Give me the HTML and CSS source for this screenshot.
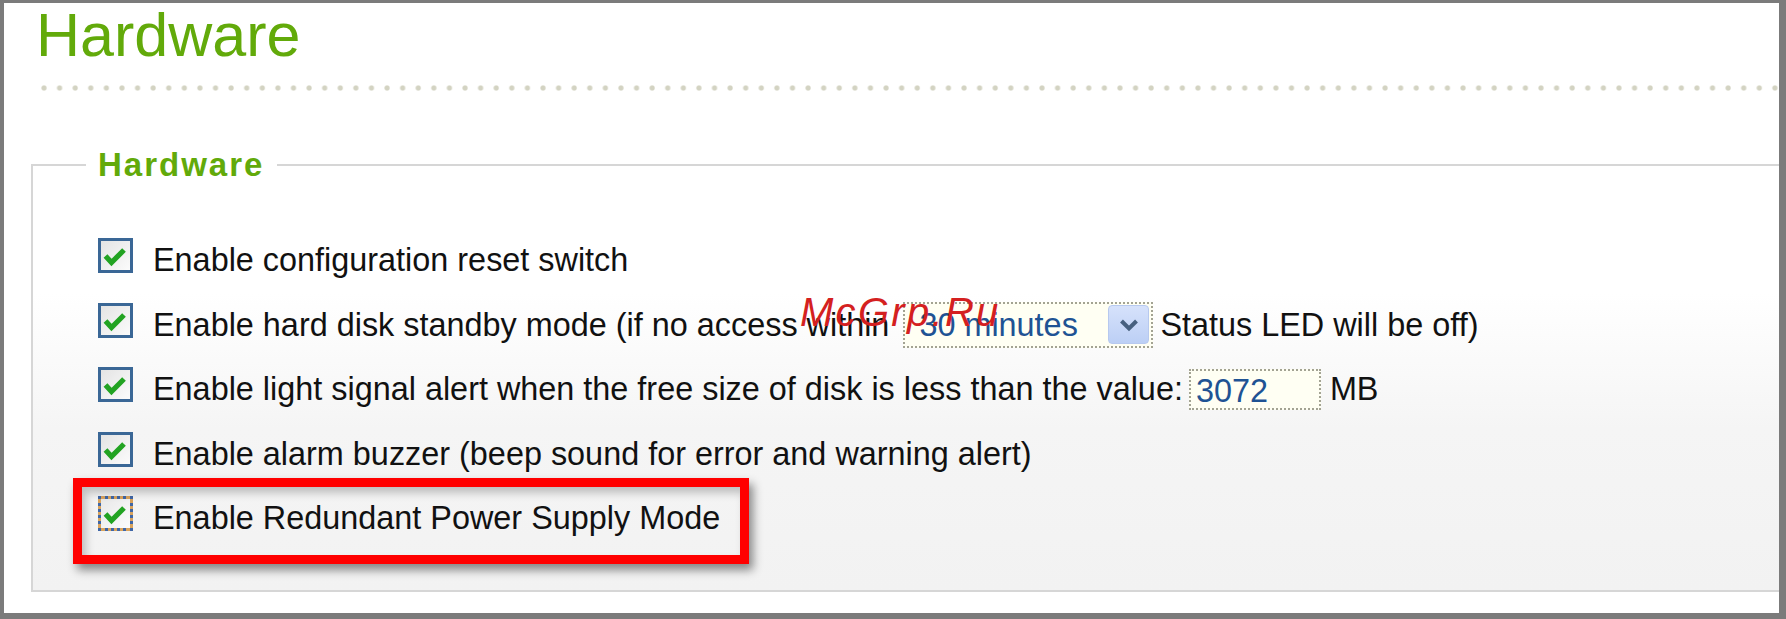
FILE: index.html
```html
<!DOCTYPE html>
<html>
<head>
<meta charset="utf-8">
<link rel="stylesheet" href="styles.css">
</head>
<body>
<div class="frame">
  <h1 class="title">Hardware</h1>
  <div class="dots"></div>
  <fieldset class="group">
    <legend class="group-title">Hardware</legend>
    <div class="row">
      <span class="cb"><svg viewBox="0 0 29 29" width="29" height="29"><polyline points="4.5,15 10.5,21.5 23,9" fill="none" stroke="#22a322" stroke-width="5.2" stroke-linejoin="miter"/></svg></span>
      <span class="label">Enable configuration reset switch</span>
    </div>
    <div class="row">
      <span class="cb"><svg viewBox="0 0 29 29" width="29" height="29"><polyline points="4.5,15 10.5,21.5 23,9" fill="none" stroke="#22a322" stroke-width="5.2" stroke-linejoin="miter"/></svg></span>
      <span class="label">Enable hard disk standby mode (if no access within</span>
      <span class="select"><span class="select-text">30 minutes</span><span class="select-btn"><svg viewBox="0 0 20 14" width="20" height="14"><polyline points="2.5,3 10,10.5 17.5,3" fill="none" stroke="#47607f" stroke-width="4"/></svg></span></span>
      <span class="label-after">Status LED will be off)</span>
    </div>
    <div class="row">
      <span class="cb"><svg viewBox="0 0 29 29" width="29" height="29"><polyline points="4.5,15 10.5,21.5 23,9" fill="none" stroke="#22a322" stroke-width="5.2" stroke-linejoin="miter"/></svg></span>
      <span class="label">Enable light signal alert when the free size of disk is less than the value:</span>
      <span class="field">3072</span>
      <span class="label-after">MB</span>
    </div>
    <div class="row">
      <span class="cb"><svg viewBox="0 0 29 29" width="29" height="29"><polyline points="4.5,15 10.5,21.5 23,9" fill="none" stroke="#22a322" stroke-width="5.2" stroke-linejoin="miter"/></svg></span>
      <span class="label">Enable alarm buzzer (beep sound for error and warning alert)</span>
    </div>
    <div class="row row-hl">
      <span class="cb cb-focus"><span class="cb-inner"><svg viewBox="0 0 29 29" width="29" height="29"><polyline points="4.5,15 10.5,21.5 23,9" fill="none" stroke="#22a322" stroke-width="5.2" stroke-linejoin="miter"/></svg></span></span>
      <span class="label">Enable Redundant Power Supply Mode</span>
      <span class="highlight"></span>
    </div>
  </fieldset>
  <div class="watermark">McGrp.Ru</div>
</div>
</body>
</html>
```

FILE: styles.css
```css
html, body {
  margin: 0;
  padding: 0;
  background: #ffffff;
}

body {
  font-family: "Liberation Sans", Arial, sans-serif;
  color: #111111;
}

.frame {
  position: relative;
  width: 1786px;
  height: 619px;
  box-sizing: border-box;
  border-style: solid;
  border-color: #7b7b7b;
  border-width: 3px 7px 6px 4px;
  background: #ffffff;
  overflow: hidden;
}

.title {
  margin: 2px 0 0 32px;
  font-size: 61px;
  line-height: 61px;
  font-weight: normal;
  color: #62aa0a;
}

.dots {
  margin: 19px 0 0 37px;
  height: 6px;
  background-image: radial-gradient(circle at 3px 3px, #d3d3c2 0, #d3d3c2 2px, rgba(211,211,194,0) 3.2px);
  background-size: 15.6px 6px;
  background-repeat: repeat-x;
}

.group {
  margin: 56px 0 22px 27px;
  padding: 45px 0 39px 65px;
  border: 2px solid #d6d6d6;
  border-right: none;
  background: linear-gradient(to bottom, #ffffff 0%, #ffffff 30%, #f5f5f5 62%, #f2f2f2 100%);
  min-width: 0;
}

.group-title {
  margin-left: -12px;
  padding: 0 13px 0 12px;
  font-size: 33px;
  line-height: 36px;
  font-weight: bold;
  letter-spacing: 2px;
  color: #62aa0a;
}

.row {
  position: relative;
  display: flex;
  align-items: center;
  height: 64.5px;
  font-size: 32.4px;
  line-height: 32px;
  white-space: nowrap;
}

.cb {
  flex: none;
  width: 35px;
  height: 35px;
  box-sizing: border-box;
  border: 3px solid #3a6796;
  background: linear-gradient(135deg, #e4e4e4 0%, #f2f2f2 60%, #fbfbfb 100%);
  display: flex;
  align-items: center;
  justify-content: center;
  margin-bottom: 9px;
}

.cb svg {
  display: block;
}

.cb-focus {
  border: 3px dotted #3f66a6;
  background: #d9a35c;
}

.cb-inner {
  width: 29px;
  height: 29px;
  background: linear-gradient(135deg, #e8e8e8 0%, #f4f4f4 60%, #fbfbfb 100%);
}

.label {
  margin-left: 20px;
}

.label-after {
  margin-left: 0;
}

.select {
  flex: none;
  display: flex;
  align-items: center;
  justify-content: space-between;
  width: 250px;
  height: 46px;
  box-sizing: border-box;
  margin: 0 7px 0 14px;
  border: 2px dotted #a3a393;
  background: #fffff3;
}

.select-text {
  padding-left: 14px;
  color: #1f5394;
}

.select-btn {
  width: 41px;
  height: 39px;
  margin-right: 2px;
  box-sizing: border-box;
  border: 1px solid #b7c9ef;
  border-radius: 4px;
  background: linear-gradient(to bottom, #d6e2fb 0%, #bccff5 100%);
  display: flex;
  align-items: center;
  justify-content: center;
}

.select-btn svg {
  display: block;
}

.field {
  flex: none;
  width: 132px;
  height: 41px;
  box-sizing: border-box;
  margin: 0 9px 0 6px;
  padding: 4px 0 0 5px;
  border: 2px dotted #a3a393;
  background: #fffff3;
  color: #1f5394;
}

.highlight {
  position: absolute;
  left: -25px;
  top: -8.5px;
  width: 676px;
  height: 86px;
  box-sizing: border-box;
  border: 9px solid #ff0000;
  box-shadow: 4px 6px 9px rgba(0, 0, 0, 0.45), inset 4px 6px 9px rgba(0, 0, 0, 0.22);
  pointer-events: none;
}

.watermark {
  position: absolute;
  left: 796px;
  top: 289px;
  font-size: 40px;
  line-height: 40px;
  font-style: italic;
  letter-spacing: 2.3px;
  color: #d42020;
}
```
